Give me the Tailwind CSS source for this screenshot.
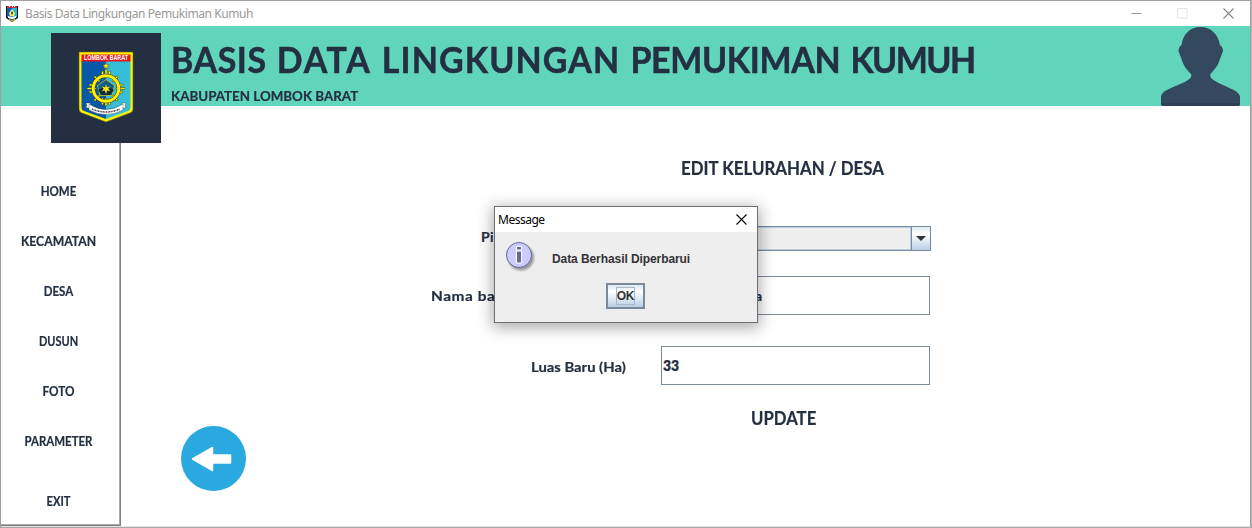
<!DOCTYPE html>
<html lang="id">
<head>
<meta charset="utf-8">
<title>Basis Data Lingkungan Pemukiman Kumuh</title>
<script src="https://cdn.jsdelivr.net/npm/@tailwindcss/browser@4"></script>
</head>
<body class="relative flex h-[528px] w-[1252px] flex-col overflow-hidden border border-t-[#a0a0a0] border-l-[#a0a0a0] border-b-[#a8a8a8] border-r-[#b5b5b5] bg-white font-['Lato',sans-serif] text-[#242f41]">

  <!-- Title bar -->
  <div class="flex h-[25px] shrink-0 items-center border-r border-[#a0a0a0] pl-[5px] font-['Noto_Sans',sans-serif]">
    <svg class="h-4 w-3 shrink-0" viewBox="0 0 12 16">
      <path d="M0 0h12v12l-6 4-6-4z" fill="#111"/>
      <path d="M1 2h5v12l-5-3z" fill="#0864b4"/><path d="M6 2h5v9l-5 3z" fill="#27b5dc"/>
      <path d="M1 0h10v2H1z" fill="#d42b35"/><path d="M3 0h1v1H3zM6 0h1v1H6zM8 0h1v1H8z" fill="#fff"/>
      <path d="M6 3l3 4-1 3H4L3 7z" fill="#ffef6a"/><path d="M6 5l1 2-1 2-1-2z" fill="#16313a"/>
      <path d="M2 10l4 1 4-1v2l-4 1-4-1z" fill="#fff"/><path d="M3 13l3 2 3-2" fill="none" stroke="#f6e51c"/>
    </svg>
    <span class="ml-[7px] whitespace-nowrap text-[12px] tracking-[-0.42px] text-[#999]">Basis Data Lingkungan Pemukiman Kumuh</span>
    <div class="ml-auto mr-4 flex items-center gap-[35px]">
      <svg class="h-[11px] w-[11px]" viewBox="0 0 11 11"><path d="M.5 5.500h10" stroke="#999"/></svg>
      <svg class="h-[11px] w-[11px]" viewBox="0 0 11 11"><path d="M.5.5h9.500v9.500H.5z" fill="none" stroke="#e5e5e5"/></svg>
      <svg class="h-[11px] w-[11px]" viewBox="0 0 11 11"><path d="M.5.5l10 10M10.500.5l-10 10" stroke="#888" stroke-width="1.100"/></svg>
    </div>
  </div>

  <!-- Header -->
  <header class="z-10 flex h-20 shrink-0 items-start border-r border-[#a0a0a0] bg-[#61d5bc] pl-[50px] pr-[10px]">
    <div class="mt-[7px] flex h-[110px] w-[110px] shrink-0 items-center justify-center bg-[#242f41]">
      <svg class="h-[72px] w-[56px] -translate-y-px" viewBox="0 0 56 72">
        <path d="M1 1h54v57q0 3-3 4L28 71 4 62q-3-1-3-4z" fill="#fff200" stroke="#5c5a25" stroke-width=".6"/>
        <path d="M3.500 10H28v58L6 60q-2.500-1-2.500-3z" fill="#0759a8"/>
        <path d="M28 10h24.500v47q0 2-2.500 3l-22 8z" fill="#36bdd8"/>
        <path d="M3.500 3.500h49v7h-49z" fill="#e8141d"/>
        <text x="28" y="9.300" text-anchor="middle" textLength="44" lengthAdjust="spacingAndGlyphs" font-family="Liberation Sans" font-size="6.300" font-weight="700" fill="#fff">LOMBOK BARAT</text>
        <path d="M28 11.500l1 2.300 2.500.1-2 1.700.8 2.500-2.300-1.500-2.300 1.500.8-2.500-2-1.700 2.500-.1z" fill="#fff200" stroke="#333" stroke-width=".4"/>
        <g stroke="#3b3a1c" stroke-width="2.500" stroke-linecap="round">
          <path d="M28 19v7M24.500 21v5M31.500 21v5M24.500 48v5M31.500 48v5M28 48v6M10 37.500h7M12 34h5M12 41h5M39 37.500h7M39 34h5M39 41h5M17 26l4 4M39 26l-4 4M17 49l4-4M39 49l-4-4"/>
        </g>
        <path d="M28 19v7M24.500 21v5M31.500 21v5M24.500 48v5M31.500 48v5M28 48v6M10 37.500h7M12 34h5M12 41h5M39 37.500h7M39 34h5M39 41h5M17 26l4 4M39 26l-4 4M17 49l4-4M39 49l-4-4" stroke="#fff200" stroke-width="1.600" stroke-linecap="round"/>
        <circle cx="28" cy="37.500" r="12.800" fill="none" stroke="#3b3a1c" stroke-width="3.800"/>
        <circle cx="28" cy="37.500" r="12.800" fill="none" stroke="#fff200" stroke-width="3"/>
        <path d="M28 28.500l8.500 6-2.500 10H22l-2.500-10z" fill="#155e88" stroke="#d5d31d" stroke-width=".7"/>
        <path d="M20 39l8-4 8 4-4 5h-8z" fill="#142c38"/>
        <path d="M28 33.500l1 2.800 3-.8-1.700 2.300 1.900 2.400-3-.6L28 43l-1.200-3.400-3 .6 1.900-2.400-1.700-2.300 3 .8z" fill="#f5e81a"/>
        <g stroke="#333" stroke-width=".4" fill="#fff"><path d="M8 52l4 0 1 6-6-2 2-1zM48 52l-4 0-1 6 6-2-2-1z"/><path d="M11 53q17 11 34 0v6q-17 9-34 0z"/></g>
        <path d="M14 58q14 6 28 0" fill="none" stroke="#333" stroke-width="1.500" stroke-dasharray="1 .6"/>
      </svg>
    </div>
    <div class="ml-[10px] flex flex-col whitespace-nowrap font-bold">
      <h1 class="mt-3 w-[804px] text-[37px] leading-[42px] [-webkit-text-stroke:0.5px_#242f41]"><span class="inline-block origin-left scale-x-[0.918] tracking-[0.6px] [word-spacing:1.5px]">BASIS <span class="tracking-[1.9px]">DATA</span> <span class="tracking-[1.2px]">LINGKUNGAN</span> <span class="tracking-[-0.4px]">PEMUKIMAN</span> <span class="tracking-[-1.7px]">KUMUH</span></span></h1>
      <p class="mt-1.5 origin-left scale-x-[0.954] text-[14px] leading-5 [-webkit-text-stroke:0.2px_#242f41]">KABUPATEN LOMBOK BARAT</p>
    </div>
    <svg class="ml-auto h-[79px] w-[79px] shrink-0 self-end" viewBox="0 0 79 79">
      <path d="M39.500 0C50 0 57 7 59 18q3 2 3 6l-3 8c-2 7-6 11-9.500 15-1 2 0 4 3 6 6 4 13 6 18 9 5 2 8.500 5 8.500 8v7q0 2-2 2H2q-2 0-2-2v-7c0-3 3-6 8-8 5-3 13-5 19-9 3-2 4-4 3-6-4-4-7.500-8-9.500-15l-3-8q0-4 3-6C22 7 29 0 39.500 0z" fill="#35495e"/>
      <path d="M0 76h79q0 3-2 3H2q-2 0-2-3z" fill="#2f3f56"/>
    </svg>
  </header>

  <div class="flex min-h-0 flex-1 border-b border-r border-[#a0a0a0] border-b-[#e3e3e3]">
    <!-- Sidebar -->
    <nav class="flex h-[420px] w-[120px] shrink-0 flex-col border-b border-r border-[#808080] pr-[4px] pt-[61px] text-center text-[12.500px] font-bold shadow-[inset_-1px_-1px_0_#a8a8a8] [-webkit-text-stroke:0.2px_#242f41]">
      <a class="h-[50px] scale-x-[0.92] leading-[50px]">HOME</a>
      <a class="h-[50px] scale-x-[0.975] leading-[50px]">KECAMATAN</a>
      <a class="h-[50px] scale-x-[0.92] leading-[50px]">DESA</a>
      <a class="h-[50px] scale-x-[0.88] leading-[50px]">DUSUN</a>
      <a class="h-[50px] scale-x-[0.94] leading-[50px]">FOTO</a>
      <a class="h-[50px] scale-x-[0.915] leading-[50px]">PARAMETER</a>
      <a class="mt-[10px] h-[48px] scale-x-[0.9] leading-[50px]">EXIT</a>
    </nav>

    <main class="flex flex-1 items-start">
      <button class="ml-[60px] mt-[320px] shrink-0">
        <svg class="block h-[65px] w-[65px]" viewBox="0 0 65 65">
          <circle cx="32.500" cy="32.500" r="32.500" fill="#29a9e0"/>
          <path d="M11.500 33L31.500 21.500v7.500H49.500v8H31.500v7.500z" fill="#fff" stroke="#fff" stroke-width="1.500" stroke-linejoin="round"/>
        </svg>
      </button>
      <form class="ml-[184px] mt-[50px] flex w-[501px] flex-col text-[14px] font-bold [-webkit-text-stroke:0.2px_#242f41]">
        <h2 class="ml-[251px] h-[26px] origin-left scale-x-[0.937] whitespace-nowrap text-[18px] leading-[25px]">EDIT KELURAHAN / DESA</h2>
        <div class="mt-11 flex h-[25px]">
          <label class="w-[231px] whitespace-nowrap pl-[51px] leading-[21px] tracking-[0.4px]">Pilih Kelurahan</label>
          <div class="flex w-[270px] border border-[#7a8a99] bg-[#eee]">
            <div class="flex-1 border border-[#b8cfe5]"></div>
            <div class="flex w-[19px] items-center justify-center border-l border-[#7a8a99] bg-linear-to-b from-[#dde8f3] via-white via-30% to-[#b8cfe5]">
              <svg class="h-[5px] w-[10px]" viewBox="0 0 10 5"><path d="M0 0h10L5 5z" fill="#333"/></svg>
            </div>
          </div>
        </div>
        <div class="mt-[25px] flex h-[39px]">
          <label class="w-[231px] whitespace-nowrap pl-px leading-10"><span class="inline-block origin-left scale-x-[1.1] tracking-[0.5px]">Nama baru</span></label>
          <div class="w-[269px] border border-[#7a8a99] pl-px leading-[38px]"><span class="inline-block w-[99px] whitespace-nowrap text-right">Kumbunga</span></div>
        </div>
        <div class="mt-[31px] flex h-[39px]">
          <label class="w-[231px] whitespace-nowrap pl-[101px] leading-[41px]"><span class="inline-block origin-left scale-x-[1.06]">Luas Baru (Ha)</span></label>
          <div class="w-[269px] border border-[#7a8a99] pl-px font-extrabold leading-[38px]">33</div>
        </div>
        <button type="button" class="ml-[321px] mt-5 w-fit origin-left scale-x-[0.93] text-[18px] leading-[27px]">UPDATE</button>
      </form>
    </main>
  </div>

  <!-- Message dialog -->
  <div class="absolute left-[493px] top-[205px] z-20 flex h-[117px] w-[264px] flex-col border border-[#6f6f6f] bg-[#eee] shadow-[0_3px_14px_2px_rgba(0,0,0,0.32)]">
    <div class="flex h-[25px] shrink-0 items-center justify-between bg-white pl-[3px] pr-[10px]">
      <span class="font-['Noto_Sans',sans-serif] text-[12px] leading-none tracking-[-0.5px] text-black">Message</span>
      <svg class="h-[11px] w-[11px]" viewBox="0 0 11 11"><path d="M.5.5l10 10M10.500.5l-10 10" stroke="#000" stroke-width="1.100"/></svg>
    </div>
    <div class="flex h-[50px] items-start pl-[10px] pt-[9px]">
      <svg class="h-8 w-8 shrink-0" viewBox="0 0 32 32">
        <defs><filter id="soft"><feGaussianBlur stdDeviation="1.200"/></filter></defs>
        <circle cx="16" cy="16.500" r="13" fill="#999" filter="url(#soft)"/>
        <circle cx="14" cy="14" r="12.500" fill="#ccccff" stroke="#666699"/>
        <path d="M11.500 5.500h5v3.500h-5zM11.500 10h5v12h-5z" fill="#666699" stroke="#fff" stroke-width="1"/>
      </svg>
      <span class="ml-[15px] mt-[10px] font-['Liberation_Sans',Arial,sans-serif] text-[12px] font-bold leading-4 tracking-[-0.08px] text-[#333]">Data Berhasil Diperbarui</span>
    </div>
    <button class="ml-[111px] mt-px flex h-[26px] w-[39px] items-center justify-center border-2 border-[#7a8a99] bg-linear-to-b from-[#dde8f3] via-white via-30% to-[#b8cfe5]">
      <span class="border border-[#a3b8cc] pt-px font-['Liberation_Sans',Arial,sans-serif] text-[12px] font-bold leading-[15px] tracking-[-0.2px] text-[#333]">OK</span>
    </button>
  </div>
</body>
</html>
